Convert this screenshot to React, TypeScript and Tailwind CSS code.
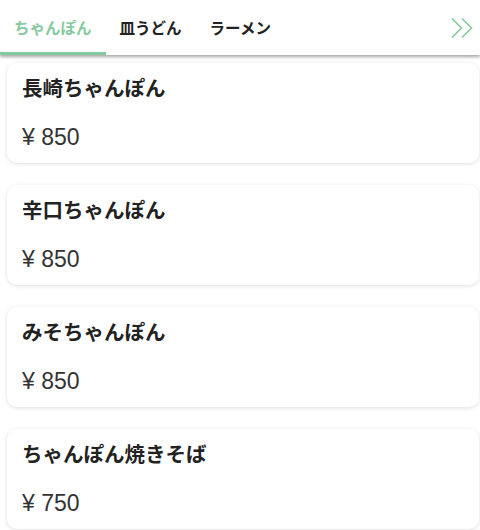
const tabs = ["ちゃんぽん", "皿うどん", "ラーメン"];

const items = [
  { name: "長崎ちゃんぽん", price: 850 },
  { name: "辛口ちゃんぽん", price: 850 },
  { name: "みそちゃんぽん", price: 850 },
  { name: "ちゃんぽん焼きそば", price: 750 },
];

export default function App() {
  return (
    <div
      className="h-[530px] w-[480px] overflow-hidden bg-white"
      style={{ fontFamily: '"Noto Sans CJK JP", "Noto Sans", sans-serif' }}
    >
      {/* タブ */}
      <div className="relative z-10 flex h-[55px] items-stretch bg-white shadow-[0_2px_3px_rgba(0,0,0,0.35)]">
        {tabs.map((tab, i) => (
          <div
            key={tab}
            className={
              i === 0
                ? "flex items-center border-b-[3px] border-[#86c99e] px-[14px] pt-[3px] text-[15.5px] font-bold text-[#86c99e]"
                : "flex items-center border-b-[3px] border-transparent px-[14px] pt-[3px] text-[15.5px] font-bold text-[#222]"
            }
          >
            {tab}
          </div>
        ))}
        <div className="ml-auto flex items-center pr-[7px]">
          <svg width="22" height="22" viewBox="0 0 22 22" fill="none" aria-hidden>
            <path
              d="M1 1.5 10.5 11 1 20.5M11 1.5 20.5 11 11 20.5"
              stroke="#86c99e"
              strokeWidth="1.6"
            />
          </svg>
        </div>
      </div>

      {/* メニュー */}
      <div className="flex flex-col gap-[22px] pt-[8px]">
        {items.map((item) => (
          <div
            key={item.name}
            className="ml-[7px] flex h-[100px] w-[472px] shrink-0 flex-col rounded-[10px] bg-white pl-[15px] pr-[15px] pt-[12px] shadow-[0_1px_4px_rgba(0,0,0,0.13)]"
          >
            <div className="text-[20.5px] font-bold leading-[24px] text-[#222]">{item.name}</div>
            <div className="mt-[26px] font-['Liberation_Sans',sans-serif] text-[23px] leading-[24px] text-[#333]">
              ¥ {item.price}
            </div>
          </div>
        ))}
      </div>
    </div>
  );
}
